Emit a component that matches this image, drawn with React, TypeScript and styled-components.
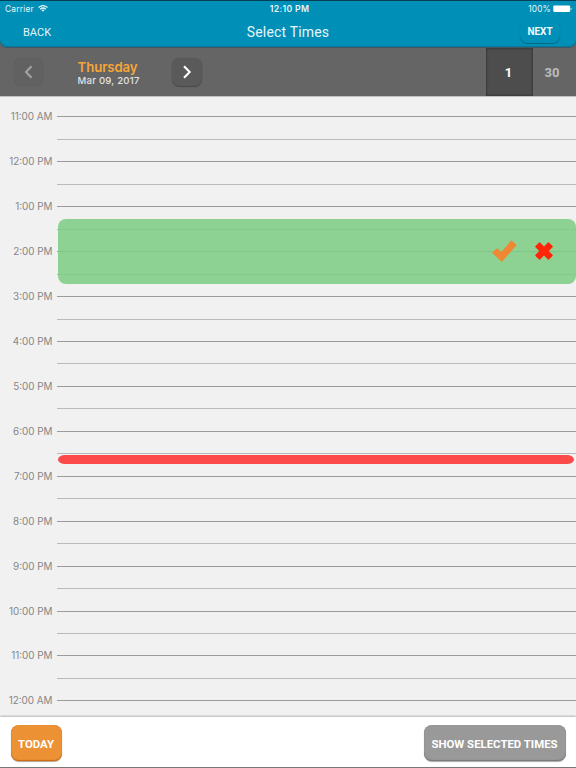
import React from "react";
import styled, { createGlobalStyle, css } from "styled-components";

const GlobalStyle = createGlobalStyle`
  * { box-sizing: border-box; }
  html, body { margin: 0; padding: 0; }
  button { border: 0; padding: 0; margin: 0; font: inherit; color: inherit; background: none; }
`;

const SLOT = 44.93;

const Screen = styled.div`
  display: flex;
  flex-direction: column;
  width: 576px;
  height: 768px;
  overflow: hidden;
  background: #f1f1f1;
  border-bottom: 1px solid #777;
  font-family: Inter, sans-serif;
`;

const HeaderWrap = styled.div`
  flex: 0 0 48px;
  background: #656565;
`;

const Header = styled.header`
  height: 47px;
  background: #008fb7;
  border-top: 1px solid #063f53;
  border-radius: 0 0 7px 7px;
  box-shadow: inset 0 -1px 0 #08769a, 0 1px 1px #3d5862;
  color: #e6f5f9;
`;

const StatusBar = styled.div`
  display: grid;
  grid-template-columns: 1fr auto 1fr;
  align-items: center;
  height: 15px;
  padding: 0 4px 0 5px;
  font-size: 8.4px;
  line-height: 10px;
`;

const Carrier = styled.span`
  display: flex;
  align-items: center;
  gap: 4px;
  letter-spacing: 0.2px;
`;

const Clock = styled.span`
  margin-left: 2px;
  font-weight: 600;
  font-size: 8.7px;
  letter-spacing: 0.3px;
`;

const Battery = styled.span`
  display: flex;
  align-items: center;
  justify-content: flex-end;
  gap: 2px;
  letter-spacing: 0.15px;
`;

const NavBar = styled.div`
  display: grid;
  grid-template-columns: 1fr auto 1fr;
  align-items: center;
  height: 31px;
  padding: 0 15px 0 23px;
  font-family: Roboto, sans-serif;
`;

const BackButton = styled.button`
  justify-self: start;
  font-size: 11px;
  line-height: 14px;
  margin-top: 3px;
`;

const Title = styled.h1`
  margin: 0 0 0 -8px;
  font-size: 14px;
  line-height: 18px;
  font-weight: 400;
  letter-spacing: 0.18px;
`;

const NextButton = styled.button`
  justify-self: end;
  width: 40px;
  height: 23px;
  margin-right: 1px;
  border-radius: 8px;
  font-size: 10px;
  font-weight: 700;
  line-height: 24px;
  color: #f0fafc;
  box-shadow: 0 1px 1px #07657f;
`;

const DateBar = styled.div`
  display: flex;
  align-items: center;
  flex: 0 0 48px;
  padding-left: 14px;
  background: #656565;
`;

const ArrowButton = styled.button<{ $muted?: boolean }>`
  display: flex;
  align-items: center;
  justify-content: center;
  width: ${(p) => (p.$muted ? 29 : 30)}px;
  height: 28px;
  border-radius: 8px;
  color: ${(p) => (p.$muted ? "#a3a3a3" : "#fff")};
  background: ${(p) => (p.$muted ? "#616161" : "#5a5a5a")};
  box-shadow: ${(p) => (p.$muted ? "0 0 1px #555" : "0 1px 1px #474747, 0 0 1px #4b4b4b")};
`;

const CurrentDate = styled.div`
  width: 128px;
  padding: 2px 0 0 34.6px;
  margin-right: 1px;
  white-space: nowrap;
`;

const Weekday = styled.div`
  color: #f6a637;
  font-size: 13.2px;
  line-height: 15px;
  font-weight: 600;
  letter-spacing: -0.1px;
`;

const FullDate = styled.div`
  color: #e2e2e2;
  font-size: 9.6px;
  line-height: 12px;
  font-weight: 500;
  letter-spacing: 0.22px;
`;

const ViewTabs = styled.div`
  display: flex;
  align-self: stretch;
  margin-left: auto;
`;

const ViewTab = styled.button<{ $active?: boolean }>`
  width: 43px;
  padding-right: 5px;
  font-family: Roboto, sans-serif;
  font-size: 13px;
  font-weight: 700;
  color: #bcbcbc;
  ${(p) =>
    p.$active &&
    css`
      width: 47px;
      padding-right: 2px;
      color: #fff;
      background: #4d4d4d;
      box-shadow: inset 0 0 3px #292929;
    `}
`;

const Schedule = styled.main`
  position: relative;
  flex: 1;
  min-height: 0;
  overflow: hidden;
  padding-top: 19.4px;
  border-top: 1px solid #c2c2c2;
`;

const Slot = styled.div`
  display: grid;
  grid-template-columns: 57px 1fr;
  height: ${SLOT}px;
`;

const HourLabel = styled.div`
  padding-right: 4.5px;
  margin-top: -6px;
  text-align: right;
  color: #868686;
  font-size: 9.9px;
  line-height: 13px;
  white-space: nowrap;
`;

const SlotLines = styled.div`
  display: grid;
  grid-template-rows: 1fr 1fr;
`;

const Line = styled.div<{ $half?: boolean }>`
  border-top: 1px solid ${(p) => (p.$half ? "#b9b9b9" : "#9b9b9b")};
`;

const Selection = styled.div`
  position: absolute;
  top: 122px;
  left: 58px;
  right: 0;
  height: 65px;
  display: flex;
  align-items: center;
  justify-content: flex-end;
  gap: 18px;
  padding: 0 23px 1px 0;
  border-radius: 8px;
  background: rgba(126, 205, 132, 0.87);
`;

const NowMarker = styled.div`
  position: absolute;
  top: 358px;
  left: 58px;
  right: 2px;
  height: 9px;
  border-radius: 8px / 5px;
  background: #fc4a4a;
`;

const IconButton = styled.button`
  display: flex;
`;

const Footer = styled.footer`
  display: flex;
  align-items: flex-start;
  justify-content: space-between;
  flex: 0 0 50px;
  padding: 8px 10px 0 11px;
  background: #fff;
  box-shadow: 0 -1px 2px #b5b5b5;
  z-index: 1;
`;

const FooterButton = styled.button<{ $primary?: boolean }>`
  width: ${(p) => (p.$primary ? 51 : 142)}px;
  height: 36px;
  padding: 1px 1px 0 0;
  border-radius: 8px;
  font-family: Roboto, sans-serif;
  font-size: 11.4px;
  font-weight: 700;
  color: #fff;
  white-space: nowrap;
  background: ${(p) => (p.$primary ? "#ed9135" : "#999")};
  box-shadow: ${(p) =>
    p.$primary
      ? "inset 0 -1px 1px #c96b17, inset 0 0 1px #bd783a, 0 1px 1px #b8a48f"
      : "inset 0 -1px 1px #777, inset 0 0 1px #808080, 0 1px 1px #aaa"};
`;

const hours = [
  "11:00 AM", "12:00 PM", "1:00 PM", "2:00 PM", "3:00 PM", "4:00 PM", "5:00 PM",
  "6:00 PM", "7:00 PM", "8:00 PM", "9:00 PM", "10:00 PM", "11:00 PM", "12:00 AM",
];

const WifiIcon = () => (
  <svg width="10" height="7" viewBox="0 0 20 14" fill="none" stroke="currentColor" strokeWidth="2.6">
    <path d="M1 5Q10-2.5 19 5M4.3 8.3Q10 3.7 15.7 8.3" />
    <path d="M6.8 10.2Q10 7.6 13.2 10.2L10 13.7Z" fill="currentColor" stroke="none" />
  </svg>
);

const BatteryIcon = () => (
  <svg width="19" height="8" viewBox="0 0 19 8" fill="#fff">
    <rect x="0.3" y="0.4" width="16.8" height="6.6" rx="1.2" />
    <path d="M17.7 2.4Q19.5 3.8 17.7 5.2Z" />
  </svg>
);

const Chevron = ({ left }: { left?: boolean }) => (
  <svg width="10" height="14" viewBox="0 0 10 14" fill="none" stroke="currentColor" strokeWidth="2.1">
    <path d={left ? "M7.5 1.2L2 7L7.5 12.8" : "M2 1.2L7.7 7L2 12.8"} />
  </svg>
);

const CheckIcon = () => (
  <svg width="25" height="22" viewBox="0 0 25 22" fill="#ee8833">
    <path d="M.6 12.1L4.8 8.5Q5.2 8.2 5.7 8.6L9.3 11.9L18.7.9Q19.2.3 19.8.8L24.2 4.5Q24.7 5 24.2 5.5L10.5 21.2Q9.8 21.9 9.1 21.3L.6 13.2Q0 12.6.6 12.1Z" />
  </svg>
);

const CrossIcon = () => (
  <svg width="18" height="18" viewBox="0 0 18 18" fill="#ff2508">
    <path d="M.5 4L4 .6Q4.6.1 5.3.7L9 4.4L12.7.7Q13.4.1 14 .6L17.5 4Q18 4.7 17.5 5.3L13.8 9L17.5 12.7Q18 13.4 17.5 14L14 17.4Q13.4 17.9 12.7 17.3L9 13.6L5.3 17.3Q4.6 17.9 4 17.4L.5 14Q0 13.4.5 12.7L4.2 9L.5 5.3Q0 4.7.5 4Z" />
  </svg>
);

export default function App() {
  return (
    <>
      <GlobalStyle />
      <Screen>
        <HeaderWrap>
          <Header>
            <StatusBar>
              <Carrier>Carrier <WifiIcon /></Carrier>
              <Clock>12:10 PM</Clock>
              <Battery>100% <BatteryIcon /></Battery>
            </StatusBar>
            <NavBar>
              <BackButton>BACK</BackButton>
              <Title>Select Times</Title>
              <NextButton>NEXT</NextButton>
            </NavBar>
          </Header>
        </HeaderWrap>
        <DateBar>
          <ArrowButton $muted aria-label="Previous day"><Chevron left /></ArrowButton>
          <CurrentDate>
            <Weekday>Thursday</Weekday>
            <FullDate>Mar 09, 2017</FullDate>
          </CurrentDate>
          <ArrowButton aria-label="Next day"><Chevron /></ArrowButton>
          <ViewTabs>
            <ViewTab $active>1</ViewTab>
            <ViewTab>30</ViewTab>
          </ViewTabs>
        </DateBar>
        <Schedule>
          {hours.map((hour) => (
            <Slot key={hour}>
              <HourLabel>{hour}</HourLabel>
              <SlotLines>
                <Line />
                <Line $half />
              </SlotLines>
            </Slot>
          ))}
          <Selection>
            <IconButton aria-label="Confirm"><CheckIcon /></IconButton>
            <IconButton aria-label="Remove"><CrossIcon /></IconButton>
          </Selection>
          <NowMarker />
        </Schedule>
        <Footer>
          <FooterButton $primary>TODAY</FooterButton>
          <FooterButton>SHOW SELECTED TIMES</FooterButton>
        </Footer>
      </Screen>
    </>
  );
}
